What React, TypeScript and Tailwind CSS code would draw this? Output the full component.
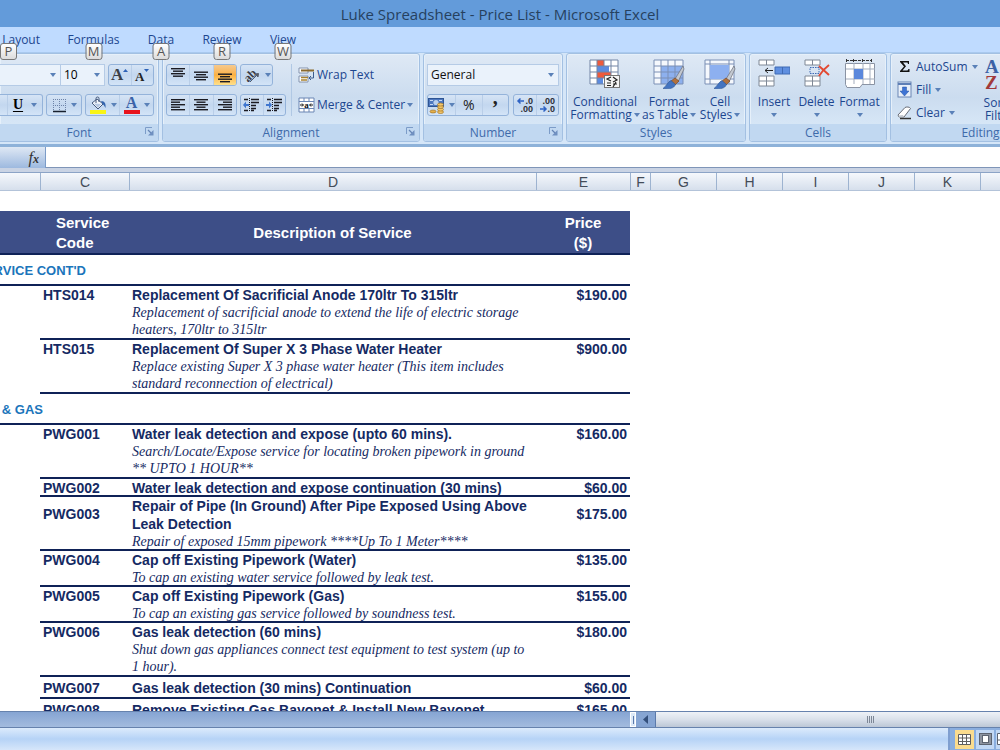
import type { ReactNode } from "react";

function Caret({ className = "" }: { className?: string }) {
  return (
    <svg viewBox="0 0 6 4" className={`h-1 w-1.5 shrink-0 ${className}`} aria-hidden="true">
      <path d="M0 0h6L3 4z" fill="#5a81b8" />
    </svg>
  );
}

function Launcher() {
  return (
    <svg viewBox="0 0 9 9" className="h-[9px] w-[9px]" aria-hidden="true">
      <path d="M.5 7V.5H7" fill="none" stroke="#7c9cc8" />
      <path d="M3 3l3 3" stroke="#6585b5" strokeWidth="1.2" />
      <path d="M8.500 3v5.500H3z" fill="#6f8fc0" />
    </svg>
  );
}

function Group({
  label,
  className,
  launcher,
  children,
}: {
  label: string;
  className: string;
  launcher?: boolean;
  children: ReactNode;
}) {
  return (
    <section
      aria-label={label}
      className={`flex shrink-0 flex-col overflow-hidden rounded-[3px] border border-[#a3c0e2] bg-linear-to-b from-[#dfe9f5] via-[#cbdcef] to-[#deedfb] shadow-[inset_0_0_0_1px_#e6f0fa] ${className}`}
    >
      <div className="flex-1">{children}</div>
      <div className="relative flex h-[17px] shrink-0 items-center justify-center bg-[#c1d8f1] text-[#3e6aaa]">
        {label}
        {launcher && (
          <button aria-label={`${label} options`} className="absolute top-[3px] right-1">
            <Launcher />
          </button>
        )}
      </div>
    </section>
  );
}

function Cluster({ className = "", children }: { className?: string; children: ReactNode }) {
  return (
    <div
      className={`flex h-[22px] shrink-0 divide-x divide-[#b9cee8] overflow-hidden rounded-[3px] border border-[#94b3da] bg-linear-to-b from-[#d6e4f5] via-[#c3d7ef] to-[#d3e4f7] ${className}`}
    >
      {children}
    </div>
  );
}

function Tool({
  label,
  active,
  caret,
  children,
}: {
  label: string;
  active?: boolean;
  caret?: boolean;
  children: ReactNode;
}) {
  return (
    <button
      aria-label={label}
      className={`flex flex-1 items-center justify-center gap-1 ${
        active ? "bg-linear-to-b from-[#f5c98d] via-[#fbb040] to-[#fee08a]" : ""
      }`}
    >
      {children}
      {caret && <Caret />}
    </button>
  );
}

function Lines({ rows }: { rows: [number, number, number][] }) {
  return (
    <svg viewBox="0 0 16 16" className="h-4 w-4" aria-hidden="true">
      {rows.map(([x, y, w]) => (
        <rect key={y} x={x} y={y} width={w} height="1.400" fill="#1b1b22" />
      ))}
    </svg>
  );
}

const alignTop: [number, number, number][] = [[1, 1, 14], [3, 3.5, 10], [1, 6, 14], [3, 8.5, 10]];
const alignMiddle: [number, number, number][] = [[1, 4.5, 14], [3, 7, 10], [1, 9.5, 14], [3, 12, 10]];
const alignBottom: [number, number, number][] = [[1, 6.5, 14], [3, 9, 10], [1, 11.5, 14], [3, 14, 10]];
const alignLeft: [number, number, number][] = [[1, 2, 14], [1, 4.5, 9], [1, 7, 14], [1, 9.5, 9], [1, 12, 14]];
const alignCenter: [number, number, number][] = [[1, 2, 14], [3.5, 4.5, 9], [1, 7, 14], [3.5, 9.5, 9], [1, 12, 14]];
const alignRight: [number, number, number][] = [[1, 2, 14], [6, 4.5, 9], [1, 7, 14], [6, 9.5, 9], [1, 12, 14]];

function Indent({ inward }: { inward?: boolean }) {
  return (
    <svg viewBox="0 0 17 16" className="h-4 w-[17px]" aria-hidden="true">
      <path d="M1 2.500h4M8 2.500h8M8 5.500h8M8 8.500h5M8 11.500h5M1 13.500h4M8 13.500h3" stroke="#1b1b22" strokeWidth="1.600" />
      <path d="M6.500 1v14" stroke="#1b1b22" strokeDasharray="1 1" />
      <path
        d={inward ? "M0 7h3V4.500L6 8l-3 3.500V9H0z" : "M6 7H3V4.500L0 8l3 3.500V9h3z"}
        fill="#3f76cf"
      />
    </svg>
  );
}

function BucketIcon() {
  return (
    <svg viewBox="0 0 18 18" className="h-[18px] w-[18px]" aria-hidden="true">
      <path d="M3 7l5-4 6 5-5 5z" fill="#f4f7fb" stroke="#45597c" />
      <path d="M5 7.500l7 .5-3 4z" fill="#b6c8e2" />
      <path d="M7 7V2.500a1.500 1.500 0 013 0V6" fill="none" stroke="#45597c" />
      <path d="M12 5c4 0 5 3 4.500 7-1-1-1-3-3-4z" fill="#3565ae" />
      <rect x="1" y="14" width="16" height="4" fill="#f8f416" />
    </svg>
  );
}

function BorderIcon() {
  return (
    <svg viewBox="0 0 15 15" className="h-[15px] w-[15px]" aria-hidden="true">
      <path d="M1 1.500h13M1 7.500h13M1.500 1v12M7.500 1v12M13.500 1v12" stroke="#6d83a8" strokeDasharray="1 1" />
      <path d="M1 13.500h13" stroke="#17202e" strokeWidth="1.500" />
    </svg>
  );
}

function OrientIcon() {
  return (
    <svg viewBox="0 0 18 18" className="h-[18px] w-[18px]" aria-hidden="true">
      <text x="2" y="13" transform="rotate(-45 8 11)" fontFamily="Liberation Serif, serif" fontWeight="700" fontSize="12" fill="#3b3b44">
        ab
      </text>
      <path d="M7 16l8-8M15.500 7.500l-3.500.5 3 3z" stroke="#555c6b" fill="#555c6b" />
    </svg>
  );
}

function WrapIcon() {
  return (
    <svg viewBox="0 0 17 16" className="h-4 w-[17px] shrink-0" aria-hidden="true">
      <path d="M1 1h9v5H1zM1 9h9v6H1z" fill="#fff" stroke="#8292ad" />
      <path d="M3 3.500h13" stroke="#8a6a2e" strokeWidth="2" />
      <path d="M3 10.500h7M3 13h6" stroke="#a9822f" strokeWidth="1.500" />
      <path d="M15.500 5v6M15.500 11h-4M13 9l-2 2 2 2" stroke="#3b5b8d" fill="none" />
    </svg>
  );
}

function MergeIcon() {
  return (
    <svg viewBox="0 0 17 16" className="h-4 w-[17px] shrink-0" aria-hidden="true">
      <path d="M1 1h15v14H1z" fill="#fff" stroke="#6b86b4" />
      <path d="M1 4.500h15M1 11.500h15M6 1v3.500M11 1v3.500M6 11.500V15M11 11.500V15" stroke="#6b86b4" />
      <text x="8.500" y="10.500" textAnchor="middle" fontFamily="Liberation Serif, serif" fontWeight="700" fontSize="9" fill="#111">
        a
      </text>
      <path d="M2 8h3M12 8h3M4 6.500L5.500 8 4 9.500M13 6.500L11.500 8 13 9.500" stroke="#111" fill="none" />
    </svg>
  );
}

function CurrencyIcon() {
  return (
    <svg viewBox="0 0 17 17" className="h-[17px] w-[17px]" aria-hidden="true">
      <rect x=".5" y="1.500" width="15" height="8" fill="#4e78bf" stroke="#2e5594" />
      <circle cx="8" cy="5.500" r="2.600" fill="#b9cfee" />
      <path d="M2 3.500h3M11 3.500h3M2 7.500h3" stroke="#c9daf2" />
      <ellipse cx="5" cy="14.500" rx="3" ry="1.500" fill="#e4b04b" stroke="#9b6a17" strokeWidth=".6" />
      {[15, 12.5, 10, 7.5].map((y) => (
        <ellipse key={y} cx="12.500" cy={y} rx="3" ry="1.500" fill="#f2c66a" stroke="#9b6a17" strokeWidth=".6" />
      ))}
    </svg>
  );
}

function DecimalIcon({ more }: { more?: boolean }) {
  return (
    <svg viewBox="0 0 18 16" className="h-4 w-[18px]" aria-hidden="true">
      <g fontFamily="Liberation Sans, sans-serif" fontWeight="700" fontSize="9" fill="#2c2f38">
        <text x="17" y="7" textAnchor="end">{more ? ".0" : ".00"}</text>
        <text x="17" y="15" textAnchor="end">{more ? ".00" : ".0"}</text>
      </g>
      {more ? (
        <path d="M2 4h6M4.500 1.500L2 4l2.500 2.500" stroke="#2f63c4" strokeWidth="1.500" fill="none" />
      ) : (
        <path d="M2 12h6M5.500 9.500L8 12l-2.500 2.500" stroke="#2f63c4" strokeWidth="1.500" fill="none" />
      )}
    </svg>
  );
}

function Brush() {
  return (
    <g>
      <path d="M30 7L22 20l3 3 6-13z" fill="#c3c8d0" stroke="#6a6f7a" strokeWidth=".7" />
      <path d="M22 19l-4 3 4 4 4-4z" fill="#b1713d" stroke="#74431d" strokeWidth=".6" />
      <path d="M18 21.500c-3 1-4 5-8 8 6 1 11 0 12.500-4z" fill="#4474c0" stroke="#2e5596" strokeWidth=".6" />
    </g>
  );
}

function ConditionalIcon() {
  return (
    <svg viewBox="0 0 32 30" className="h-[30px] w-8" aria-hidden="true">
      <path d="M1 1h28v24H1z" fill="#fff" />
      <path d="M8 1h7v6H8zM8 13h14v6H8z" fill="#ee5a3c" />
      <path d="M8 7h12v6H8zM8 19h6v6H8z" fill="#5c8be0" />
      <path d="M1 1h28v24H1zM8 1v24M15 1v6M22 1v24M1 7h28M1 13h28M1 19h28" fill="none" stroke="#7385a5" />
      <rect x="15.500" y="16.500" width="15" height="12" fill="#f4f4f4" stroke="#777" />
      <path d="M22 18l-4 2 4 2M18 24h4M18 26.500h4M24 18l4 3-4 2M24 25h4M27 23l-3 5" stroke="#222" strokeWidth="1.200" fill="none" />
    </svg>
  );
}

function FormatTableIcon() {
  return (
    <svg viewBox="0 0 32 30" className="h-[30px] w-8" aria-hidden="true">
      <path d="M1 1h29v24H1z" fill="#f5f8fd" />
      <path d="M8 7h22v18H8z" fill="#8db0ee" />
      <path d="M1 1h29v24H1zM8 1v24M15 1v24M22 1v24M1 7h29M1 13h29M1 19h29" fill="none" stroke="#7b8fb5" />
      <Brush />
    </svg>
  );
}

function CellStylesIcon() {
  return (
    <svg viewBox="0 0 32 30" className="h-[30px] w-8" aria-hidden="true">
      <path d="M1 1h29v24H1z" fill="#f5f8fd" stroke="#7b8fb5" />
      <path d="M6 1v24M25 1v24M1 5h29M1 20h29" stroke="#7b8fb5" />
      <path d="M6 6h19v14H6z" fill="#8db0f0" />
      <Brush />
    </svg>
  );
}

function InsertIcon() {
  return (
    <svg viewBox="0 0 32 30" className="h-[30px] w-8" aria-hidden="true">
      <path d="M1 1h15v5H1zM1 17h15v10H1z" fill="#fff" stroke="#7f8896" />
      <path d="M8.500 1v5M8.500 17v10M1 22h15" stroke="#7f8896" />
      <path d="M17 8h15v7H17z" fill="#5f8fe0" stroke="#3f6ab4" />
      <path d="M24.500 8v7" stroke="#3f6ab4" />
      <path d="M7 11.500h8M10 9l-3 2.500 3 2.500" stroke="#222" fill="none" />
    </svg>
  );
}

function DeleteIcon() {
  return (
    <svg viewBox="0 0 32 30" className="h-[30px] w-8" aria-hidden="true">
      <path d="M4 1h15v5H4zM4 17h15v10H4z" fill="#fff" stroke="#7f8896" />
      <path d="M11.500 1v5M11.500 17v10M4 22h15" stroke="#7f8896" />
      <path d="M9 8.500h9v6H9z" fill="none" stroke="#3f6ab4" strokeDasharray="1.500 1" />
      <path d="M18 7l10 9M28 6c-4 3-7 6-10 11" stroke="#e24a33" strokeWidth="2" fill="none" />
    </svg>
  );
}

function FormatCellsIcon() {
  return (
    <svg viewBox="0 0 32 30" className="h-[30px] w-8" aria-hidden="true">
      <path d="M2 1.500h26" stroke="#333" strokeDasharray="3 1" />
      <path d="M2.500 0v3M9.500 0v3M18.500 0v3M27.500 0v3" stroke="#333" />
      <path d="M1.500 4.500h29v21H18l-2 3H3l-1.500-3z" fill="#fff" stroke="#8a93a3" />
      <path d="M2 10h29M2 20h29M10 4v21M19 4v21M26 4v21" stroke="#a3adbd" />
      <path d="M10 10h9v10h-9z" fill="#5b88dc" />
    </svg>
  );
}

function FillIcon() {
  return (
    <svg viewBox="0 0 15 17" className="h-[17px] w-[15px]" aria-hidden="true">
      <rect x="1" y="1" width="13" height="15" fill="#e9f0fa" stroke="#6b86b4" />
      <path d="M1 2h13v2H1z" fill="#5e7fb6" />
      <path d="M5.500 6h4v4H12l-4.500 5L3 10h2.500z" fill="#3e74d4" stroke="#2954a3" strokeWidth=".5" />
    </svg>
  );
}

function EraserIcon() {
  return (
    <svg viewBox="0 0 15 14" className="h-3.5 w-[15px]" aria-hidden="true">
      <path d="M1 9l7-7.500c1-.8 5-.8 5.500 1L7 11H2z" fill="#fff" stroke="#676c76" />
      <path d="M1.500 9.500L6 9l1 2.500H2.500z" fill="#c3c8d0" />
      <path d="M3 12.500h11" stroke="#333" strokeWidth="1.500" />
    </svg>
  );
}

function BigTool({
  icon,
  lines,
  className,
}: {
  icon: ReactNode;
  lines: [string, string?];
  className: string;
}) {
  const [first, second] = lines;
  return (
    <button className={`flex shrink-0 flex-col items-center leading-[13px] whitespace-nowrap ${className}`}>
      {icon}
      <span className="mt-1.5">{first}</span>
      <span className="flex h-[13px] items-center gap-0.5">
        {second}
        <Caret />
      </span>
    </button>
  );
}

function FontGroup() {
  return (
    <Group label="Font" launcher className="w-[159px] rounded-l-none border-l-0 pl-0">
      <div className="flex flex-col gap-2 pt-2.5 pr-1">
        <div className="flex justify-between">
          <div className="flex">
            <label className="relative flex h-[22px] w-[61px] items-center border border-l-0 border-[#b5cbe6] bg-[#eaf2fb]">
              <select aria-label="Font name" className="h-full w-full appearance-none outline-none">
                <option aria-label="Arial" />
              </select>
              <Caret className="absolute right-1" />
            </label>
            <label className="relative flex h-[22px] w-[44px] items-center border border-l-0 border-[#b5cbe6] bg-[#eaf2fb]">
              <select aria-label="Font size" className="h-full w-full appearance-none pl-[3px] text-black outline-none">
                <option>10</option>
              </select>
              <Caret className="absolute right-1" />
            </label>
          </div>
          <Cluster className="w-[46px]">
            <Tool label="Increase font size">
              <span className="font-['Liberation_Serif',serif] text-[17px] leading-4 font-bold text-[#3b3f48]">A</span>
              <svg viewBox="0 0 5 3" className="-ml-1 h-[3px] w-[5px] self-start mt-1" aria-hidden="true">
                <path d="M0 3h5L2.500 0z" fill="#2d62b8" />
              </svg>
            </Tool>
            <Tool label="Decrease font size">
              <span className="mt-1 font-['Liberation_Serif',serif] text-[13px] leading-4 font-bold text-[#222]">A</span>
              <svg viewBox="0 0 5 3" className="-ml-1 h-[3px] w-[5px] self-start mt-1" aria-hidden="true">
                <path d="M0 0h5L2.500 3z" fill="#2d62b8" />
              </svg>
            </Tool>
          </Cluster>
        </div>
        <div className="flex justify-between">
          <Cluster className="w-[43px] rounded-l-none border-l-0">
            <span className="w-2 shrink-0" />
            <Tool label="Underline" caret>
              <span className="pr-1 font-['Liberation_Serif',serif] text-sm leading-4 font-bold text-black underline underline-offset-2">U</span>
            </Tool>
          </Cluster>
          <Cluster className="w-9">
            <Tool label="Borders" caret>
              <BorderIcon />
            </Tool>
          </Cluster>
          <Cluster className="w-[69px]">
            <Tool label="Fill color" caret>
              <BucketIcon />
            </Tool>
            <Tool label="Font color" caret>
              <span className="flex h-[18px] w-4 flex-col items-center border-b-4 border-[#e8131c] font-['Liberation_Serif',serif] text-base leading-[14px] font-bold text-[#3a62a8]">
                A
              </span>
            </Tool>
          </Cluster>
        </div>
      </div>
    </Group>
  );
}

function AlignmentGroup() {
  return (
    <Group label="Alignment" launcher className="w-[258px]">
      <div className="flex gap-[3px] pt-2.5 pl-[3px]">
        <div className="flex flex-col gap-2">
          <div className="flex w-[122px] gap-[3px]">
            <Cluster className="w-[71px]">
              <Tool label="Top align"><Lines rows={alignTop} /></Tool>
              <Tool label="Middle align"><Lines rows={alignMiddle} /></Tool>
              <Tool label="Bottom align" active><Lines rows={alignBottom} /></Tool>
            </Cluster>
            <Cluster className="w-[33px]">
              <Tool label="Orientation" caret><OrientIcon /></Tool>
            </Cluster>
          </div>
          <div className="flex gap-[3px]">
            <Cluster className="w-[71px]">
              <Tool label="Align left"><Lines rows={alignLeft} /></Tool>
              <Tool label="Center"><Lines rows={alignCenter} /></Tool>
              <Tool label="Align right"><Lines rows={alignRight} /></Tool>
            </Cluster>
            <Cluster className="w-[46px]">
              <Tool label="Decrease indent"><Indent /></Tool>
              <Tool label="Increase indent"><Indent inward /></Tool>
            </Cluster>
          </div>
        </div>
        <div className="flex flex-col gap-2 border-l border-[#b0c8e4] pl-1.5 whitespace-nowrap">
          <button className="flex h-[22px] items-center gap-0.5">
            <WrapIcon />
            Wrap Text
          </button>
          <button className="flex h-[22px] items-center gap-0.5">
            <MergeIcon />
            Merge &amp; Center
            <Caret />
          </button>
        </div>
      </div>
    </Group>
  );
}

function NumberGroup() {
  return (
    <Group label="Number" launcher className="w-[140px]">
      <div className="flex flex-col gap-2 px-[3px] pt-2.5">
        <label className="relative flex h-[22px] items-center border border-[#b5cbe6] bg-[#eaf2fb]">
          <select aria-label="Number format" className="h-full w-full appearance-none pl-[3px] text-[#111] outline-none">
            <option>General</option>
          </select>
          <Caret className="absolute right-1" />
        </label>
        <div className="flex justify-between">
          <Cluster className="w-[82px]">
            <Tool label="Accounting format" caret><CurrencyIcon /></Tool>
            <Tool label="Percent style">
              <span className="text-sm text-[#222]">%</span>
            </Tool>
            <Tool label="Comma style">
              <span className="self-start font-['Liberation_Serif',serif] text-xl leading-1 font-bold text-[#222]">,</span>
            </Tool>
          </Cluster>
          <Cluster className="w-[46px]">
            <Tool label="Increase decimal"><DecimalIcon more /></Tool>
            <Tool label="Decrease decimal"><DecimalIcon /></Tool>
          </Cluster>
        </div>
      </div>
    </Group>
  );
}

function EditingGroup() {
  return (
    <Group label="Editing" className="w-[181px]">
      <div className="flex pt-px pl-1.5">
        <div className="flex w-[84px] shrink-0 flex-col whitespace-nowrap">
          <button className="flex h-[23px] items-center gap-1">
            <svg viewBox="0 0 15 15" className="h-[15px] w-[15px]" aria-hidden="true">
              <path d="M3 2h9v3h-1L10.500 3.500H6L9 7.300 5.500 11.500h5L11.500 10h1v3H3v-1l4-4.500L3 3z" fill="#111" />
            </svg>
            AutoSum
            <Caret />
          </button>
          <button className="flex h-[23px] items-center gap-1">
            <FillIcon />
            Fill
            <Caret />
          </button>
          <button className="flex h-[23px] items-center gap-1">
            <EraserIcon />
            Clear
            <Caret />
          </button>
        </div>
        <button className="flex w-[44px] flex-col items-center pt-1 leading-[13px] whitespace-nowrap">
          <svg viewBox="0 0 36 31" className="h-[31px] w-10" aria-hidden="true">
            <g fontFamily="Liberation Serif, serif" fontWeight="700" fontSize="19">
              <text x="0" y="14" fill="#3b62a6">A</text>
              <text x="0" y="30" fill="#a23a3a">Z</text>
            </g>
            <path d="M16 6h14l-5 7v10l-4-3v-7z" fill="#e8edf5" stroke="#6a6f7a" />
          </svg>
          <span className="mt-1.5 pr-1">Sort &amp;</span>
          <span className="flex items-center gap-0.5">
            Filter
            <Caret />
          </span>
        </button>
      </div>
    </Group>
  );
}

function Tab({
  label,
  hint,
  className,
  hintClass = "left-1/2 -translate-x-1/2",
}: {
  label: string;
  hint: string;
  className: string;
  hintClass?: string;
}) {
  return (
    <button role="tab" className={`relative flex h-[25px] shrink-0 items-center whitespace-nowrap ${className}`}>
      {label}
      <span
        className={`absolute top-4 z-10 flex h-[17px] w-[17px] items-center justify-center rounded-[3px] border border-[#777] bg-linear-to-b from-white to-[#dcdcdc] text-[13px] text-[#555] ${hintClass}`}
      >
        {hint}
      </span>
    </button>
  );
}

const columns: [string, string][] = [
  ["", "w-[41px]"],
  ["C", "w-[89px]"],
  ["D", "w-[407px]"],
  ["E", "w-[94px]"],
  ["F", "w-5"],
  ["G", "w-[66px]"],
  ["H", "w-[66px]"],
  ["I", "w-[66px]"],
  ["J", "w-[66px]"],
  ["K", "w-[66px]"],
];

type Item = { code: string; title: string; note?: string; price: string; size: string; cell?: string };

const tall = "h-[54px]";

const hotWater: Item[] = [
  { code: "HTS014", title: "Replacement Of Sacrificial Anode 170ltr To 315ltr", note: "Replacement of sacrificial anode to extend the life of electric storage\nheaters, 170ltr to 315ltr", price: "$190.00", size: tall },
  { code: "HTS015", title: "Replacement Of Super X 3 Phase Water Heater", note: "Replace existing Super X 3 phase water heater (This item includes\nstandard reconnection of electrical)", price: "$900.00", size: tall },
];

const waterGas: Item[] = [
  { code: "PWG001", title: "Water leak detection and expose (upto 60 mins).", note: "Search/Locate/Expose service for locating broken pipework in ground\n** UPTO 1 HOUR**", price: "$160.00", size: tall },
  { code: "PWG002", title: "Water leak detection and expose continuation (30 mins)", price: "$60.00", size: "h-[18px]" },
  { code: "PWG003", title: "Repair of Pipe (In Ground) After Pipe Exposed Using Above\nLeak Detection", note: "Repair of exposed 15mm pipework ****Up To 1 Meter****", price: "$175.00", size: tall, cell: "pt-2" },
  { code: "PWG004", title: "Cap off Existing Pipework (Water)", note: "To cap an existing water service followed by leak test.", price: "$135.00", size: "h-9" },
  { code: "PWG005", title: "Cap off Existing Pipework (Gas)", note: "To cap an existing gas service followed by soundness test.", price: "$155.00", size: "h-9" },
  { code: "PWG006", title: "Gas leak detection (60 mins)", note: "Shut down gas appliances connect test equipment to test system (up to\n1 hour).", price: "$180.00", size: tall },
  { code: "PWG007", title: "Gas leak detection (30 mins) Continuation", price: "$60.00", size: "h-[22px]", cell: "align-middle" },
  { code: "PWG008", title: "Remove Existing Gas Bayonet & Install New Bayonet", price: "$165.00", size: "h-[22px]", cell: "align-middle" },
];

const rule = "shadow-[inset_0_-2px_0_#0f2257]";

function Section({ name, className }: { name: string; className: string }) {
  return (
    <tr className="h-[31px]">
      <th colSpan={4} scope="colgroup" className={`text-[13px] font-bold text-[#1b75bb] ${rule}`}>
        <div className={`flex justify-end overflow-hidden whitespace-nowrap ${className}`}>{name}</div>
      </th>
    </tr>
  );
}

function Row({ item }: { item: Item }) {
  const cell = item.cell ?? "";
  return (
    <tr className={`align-top ${item.size}`}>
      <td />
      <td className={`pl-[3px] ${rule} ${cell}`}>{item.code}</td>
      <td className={`pl-[3px] whitespace-pre ${rule} ${cell === "align-middle" ? cell : ""}`}>
        <p>{item.title}</p>
        {item.note && (
          <p className="font-['Liberation_Serif',serif] text-sm leading-[17px] font-normal italic">{item.note}</p>
        )}
      </td>
      <td className={`pr-[3px] text-right ${rule} ${cell}`}>{item.price}</td>
    </tr>
  );
}

export default function App() {
  return (
    <div className="flex h-screen w-full flex-col overflow-hidden bg-white font-['Open_Sans',sans-serif] text-xs text-[#1c468f]">
      <header className="flex h-[27px] shrink-0 items-center justify-center bg-[#639bda] text-[15px] text-[#26415f]">
        <h1>Luke Spreadsheet - Price List - Microsoft Excel</h1>
      </header>

      <nav role="tablist" className="flex h-[25px] shrink-0 bg-[#bfdbff]">
        <Tab label="e Layout" hint="P" className="w-10 justify-end" hintClass="left-0" />
        <Tab label="Formulas" hint="M" className="ml-5 w-[67px] justify-center" />
        <Tab label="Data" hint="A" className="ml-3.5 w-10 justify-center" />
        <Tab label="Review" hint="R" className="ml-3.5 w-[54px] justify-center" />
        <Tab label="View" hint="W" className="ml-3.5 w-10 justify-center" />
      </nav>

      <div className="flex h-[92px] shrink-0 gap-[3px] overflow-hidden border-t border-[#a9c9ee] bg-[#d5e6f8] pb-0.5">
        <FontGroup />
        <AlignmentGroup />
        <NumberGroup />
        <Group label="Styles" className="w-[180px]">
          <div className="flex gap-0.5 pt-[5px] pl-[3px]">
            <BigTool className="w-[70px]" icon={<ConditionalIcon />} lines={["Conditional", "Formatting"]} />
            <BigTool className="w-[54px]" icon={<FormatTableIcon />} lines={["Format", "as Table"]} />
            <BigTool className="w-[44px]" icon={<CellStylesIcon />} lines={["Cell", "Styles"]} />
          </div>
        </Group>
        <Group label="Cells" className="w-[138px]">
          <div className="flex pt-[5px] pl-[3px]">
            <BigTool className="w-[42px]" icon={<InsertIcon />} lines={["Insert"]} />
            <BigTool className="w-[43px]" icon={<DeleteIcon />} lines={["Delete"]} />
            <BigTool className="w-[43px]" icon={<FormatCellsIcon />} lines={["Format"]} />
          </div>
        </Group>
        <EditingGroup />
      </div>

      <div className="flex h-7 shrink-0 border-t-[3px] border-b-4 border-t-[#8eb2d9] border-b-[#c9d3e4]">
        <button
          aria-label="Insert function"
          className="flex w-[46px] items-center justify-end border-r border-[#7c9cc8] bg-linear-to-b from-[#dfe8f4] to-[#9db9df] pr-1.5 font-['Liberation_Serif',serif] text-base text-[#333] italic"
        >
          f<span className="pt-0.5 text-xs font-bold">x</span>
        </button>
        <input aria-label="Formula bar" className="min-w-0 flex-1 border-b border-[#7f95b8] bg-white px-1 outline-none" />
      </div>

      <div className="flex h-[19px] shrink-0 border-t border-b border-t-[#8ba3c6] border-b-[#b3c3d9] bg-linear-to-b from-[#f5f8fc] to-[#d6dfec] font-['Liberation_Sans',sans-serif] text-sm text-[#444c58]">
        {columns.map(([name, width], i) => (
          <div key={i} className={`flex shrink-0 items-center justify-center border-r border-[#9db3d0] ${width}`}>
            {name}
          </div>
        ))}
      </div>

      <main className="min-h-0 flex-1 overflow-hidden bg-white pt-5">
        <table className="w-[630px] table-fixed border-separate border-spacing-0 font-['Liberation_Sans',sans-serif] text-sm leading-[18px] font-bold text-[#152a63]">
          <colgroup>
            <col className="w-10" />
            <col className="w-[89px]" />
            <col className="w-[407px]" />
            <col className="w-[94px]" />
          </colgroup>
          <thead>
            <tr className="h-11 bg-[#3d4e87] text-[15px] leading-5 text-white">
              <th className={rule} />
              <th className={`pl-4 text-left ${rule}`}>
                Service
                <br />
                Code
              </th>
              <th className={rule}>Description of Service</th>
              <th className={rule}>
                Price
                <br />
                ($)
              </th>
            </tr>
          </thead>
          <tbody>
            <Section name="RVICE CONT'D" className="w-[86px]" />
            {hotWater.map((item) => (
              <Row key={item.code} item={item} />
            ))}
            <Section name="& GAS" className="w-[43px]" />
            {waterGas.map((item) => (
              <Row key={item.code} item={item} />
            ))}
          </tbody>
        </table>
      </main>

      <div className="flex h-[17px] shrink-0 border-t border-b border-[#6682ad] bg-[#86a5d3]">
        <div className="w-[630px] bg-linear-to-b from-[#86a5d3] to-[#a3bbde]" />
        <div className="flex w-1.5 items-center justify-center border border-white bg-[#dbe8f7]">
          <span className="h-2 w-px bg-[#5b7aab]" />
        </div>
        <button aria-label="Scroll left" className="flex w-[19px] items-center justify-center">
          <svg viewBox="0 0 5 9" className="h-[9px] w-[5px]" aria-hidden="true">
            <path d="M5 0v9L0 4.500z" fill="#34507c" />
          </svg>
        </button>
        <div className="flex flex-1 items-center border-l border-[#5b7aab] bg-linear-to-b from-[#eef2f7] via-[#d9e0ea] to-[#bcc7d6] pl-[211px]">
          <span className="flex gap-px">
            {[0, 1, 2, 3].map((n) => (
              <span key={n} className="h-[7px] w-px bg-[#7d8796]" />
            ))}
          </span>
        </div>
      </div>

      <footer className="flex h-[22px] shrink-0 bg-linear-to-b from-[#dcebfc] via-[#b6d3f6] to-[#d6e6fa]">
        <div className="flex-1" />
        <div className="flex w-[52px] shrink-0 items-center gap-0.5 overflow-hidden border-l-2 border-[#7f9fd0] bg-[#8aaedf] pl-[5px]">
          <button aria-label="Normal view" className="flex h-[19px] w-[19px] shrink-0 items-center justify-center bg-[#fbdc8e]">
            <svg viewBox="0 0 13 11" className="h-[11px] w-[13px]" aria-hidden="true">
              <path d="M.5.500h12v10H.500zM4.500 0v11M8.500 0v11M0 4h13M0 7.500h13" fill="#fff" stroke="#5f5f5f" />
            </svg>
          </button>
          <button aria-label="Page layout view" className="flex h-[19px] w-[18px] shrink-0 items-center justify-center bg-[#c2d8f4]">
            <svg viewBox="0 0 13 12" className="h-3 w-[13px]" aria-hidden="true">
              <rect x=".5" y=".5" width="12" height="11" fill="#8c939f" stroke="#5c6370" />
              <rect x="3.500" y="2.500" width="6" height="7" fill="#fff" stroke="#5c6370" />
            </svg>
          </button>
          <button aria-label="Page break preview" className="flex h-[19px] w-[18px] shrink-0 items-center bg-[#c2d8f4] pl-px">
            <svg viewBox="0 0 13 12" className="h-3 w-[13px]" aria-hidden="true">
              <path d="M.5.500h12v11H.500zM0 7h13" fill="#fff" stroke="#5c6370" />
            </svg>
          </button>
        </div>
      </footer>
    </div>
  );
}
